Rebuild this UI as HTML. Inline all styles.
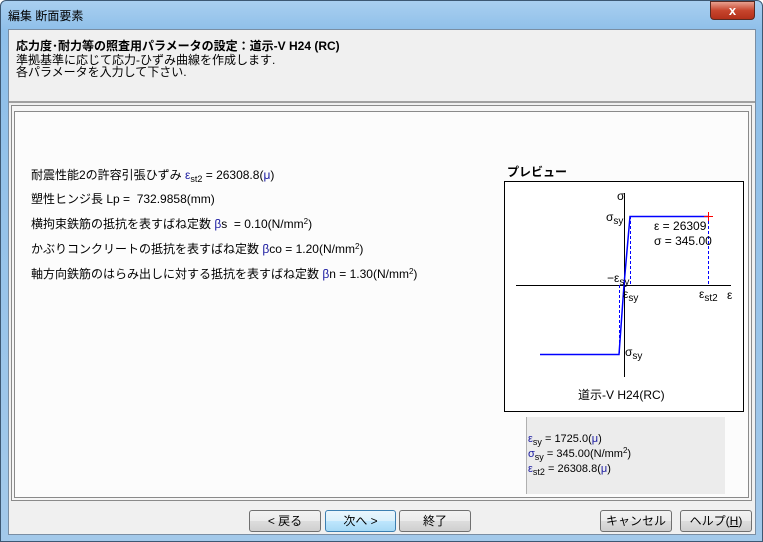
<!DOCTYPE html>
<html><head><meta charset="utf-8"><style>
*{margin:0;padding:0;box-sizing:border-box}
body{width:763px;height:542px;overflow:hidden;font-family:"Liberation Sans","Noto Sans CJK JP",sans-serif;font-size:12px;color:#000;position:relative;background:#fff}
.frame{position:absolute;left:0;top:0;width:763px;height:542px;background:linear-gradient(180deg,#a9cff0 0,#8ebfe9 30px,#a3c9ea 100%);border:1px solid #3d5873;border-radius:6px 6px 0 0}
.title{position:absolute;left:8px;top:7px;font-size:12px;color:#000}
.close{position:absolute;left:710px;top:1px;width:45px;height:19px;border:1px solid #5a2a22;border-radius:0 0 4px 4px;background:linear-gradient(#e8a08f,#c7452d 50%,#b3301a);color:#fff;font-weight:bold;text-align:center;line-height:17px;font-size:13px}
.client{position:absolute;left:8px;top:29px;width:748px;height:506px;background:#f0f0f0;border:1px solid #7a8ea3}
.hdr{position:absolute;left:0;top:0;width:746px;height:73px;border-bottom:2px solid #a0a0a0;background:#f0f0f0}
.abs{position:absolute;white-space:nowrap}
.p1{position:absolute;left:2px;top:75px;width:741px;height:396px;border:1px solid #8a8a8a;background:#f6f6f6}
.p2{position:absolute;left:5px;top:81px;width:735px;height:387px;border:1px solid #8a8a8a;background:#fcfcfc}
.btn{position:absolute;top:510px;height:22px;border:1px solid #707070;border-radius:3px;background:linear-gradient(#f2f2f2 0,#ebebeb 50%,#dddddd 51%,#cfcfcf);text-align:center;line-height:20px;font-size:12px}
.btn.def{border-color:#3c7fb1;background:linear-gradient(#eaf6fd,#d9f0fc 50%,#bee6fd 51%,#a7d9f5)}
.b{color:#1a1aa0}
sub{font-size:9px;vertical-align:-3px;line-height:0}
sup{font-size:8px;vertical-align:4px;line-height:0}
</style></head><body>
<div class="frame"></div>
<div class="title">編集 断面要素</div>
<div class="close">x</div>
<div class="client">
 <div class="hdr">
  <div class="abs" style="left:7px;top:9px;font-weight:bold;font-size:12px;line-height:14px">応力度･耐力等の照査用パラメータの設定：道示-V H24 (RC)</div>
  <div class="abs" style="left:7px;top:24px;line-height:12px">準拠基準に応じて応力-ひずみ曲線を作成します.<br>各パラメータを入力して下さい.</div>
 </div>
 <div class="p1"></div>
 <div class="p2"></div>
</div>
<div class="abs" style="left:31px;top:166px">耐震性能2の許容引張ひずみ <span class="b">ε</span><sub>st2</sub> = 26308.8(<span class="b">μ</span>)</div>
<div class="abs" style="left:31px;top:190px">塑性ヒンジ長 Lp =&nbsp; 732.9858(mm)</div>
<div class="abs" style="left:31px;top:215px">横拘束鉄筋の抵抗を表すばね定数 <span class="b">β</span>s&nbsp; = 0.10(N/mm<sup>2</sup>)</div>
<div class="abs" style="left:31px;top:240px">かぶりコンクリートの抵抗を表すばね定数 <span class="b">β</span>co = 1.20(N/mm<sup>2</sup>)</div>
<div class="abs" style="left:31px;top:265px">軸方向鉄筋のはらみ出しに対する抵抗を表すばね定数 <span class="b">β</span>n = 1.30(N/mm<sup>2</sup>)</div>
<div class="abs" style="left:507px;top:163px;font-weight:bold">プレビュー</div>
<svg class="abs" style="left:504px;top:181px" width="241" height="232" viewBox="504 181 241 232">
<rect x="504.5" y="181.5" width="239" height="230" fill="#fff" stroke="#000"/>
<line x1="624.5" y1="193" x2="624.5" y2="377" stroke="#000"/>
<line x1="516" y1="285.5" x2="731" y2="285.5" stroke="#000"/>
<g stroke="#00f" stroke-dasharray="3,2"><line x1="708.5" y1="216" x2="708.5" y2="285"/><line x1="630.5" y1="216" x2="630.5" y2="285"/><line x1="619.5" y1="285" x2="619.5" y2="354"/></g>
<polyline points="540,354.5 619,354.5 624,285 630,216.5 708,216.5" fill="none" stroke="#00f" stroke-width="1.5"/>
<g stroke="#f00"><line x1="704" y1="216.5" x2="713" y2="216.5"/><line x1="708.5" y1="212" x2="708.5" y2="221"/></g>
<g font-family="Liberation Sans,sans-serif" font-size="12" fill="#000">
<text x="617" y="200">σ</text>
<text x="606" y="221">σ<tspan font-size="10" dy="3">sy</tspan></text>
<text x="654" y="230">ε = 26309</text>
<text x="654" y="245">σ = 345.00</text>
<text x="607" y="282">−ε<tspan font-size="10" dy="3">sy</tspan></text>
<text x="623" y="298">ε<tspan font-size="10" dy="3">sy</tspan></text>
<text x="699" y="298">ε<tspan font-size="10" dy="3">st2</tspan></text>
<text x="727" y="299">ε</text>
<text x="625" y="356">σ<tspan font-size="10" dy="3">sy</tspan></text>
<text x="578" y="399">道示-V H24(RC)</text>
</g>
</svg>
<div class="abs" style="left:526px;top:417px;width:199px;height:77px;background:#ececec;border-left:1px solid #b0b0b0"></div>
<div class="abs" style="left:528px;top:432px;line-height:15px;font-size:11px"><span class="b">ε</span><sub>sy</sub> = 1725.0(<span class="b">μ</span>)<br><span class="b">σ</span><sub>sy</sub> = 345.00(N/mm<sup>2</sup>)<br><span class="b">ε</span><sub>st2</sub> = 26308.8(<span class="b">μ</span>)</div>
<div class="btn" style="left:249px;width:72px">&lt; 戻る</div>
<div class="btn def" style="left:325px;width:71px">次へ &gt;</div>
<div class="btn" style="left:399px;width:72px">終了</div>
<div class="btn" style="left:600px;width:72px">キャンセル</div>
<div class="btn" style="left:680px;width:72px">ヘルプ(<u>H</u>)</div>
</body></html>
